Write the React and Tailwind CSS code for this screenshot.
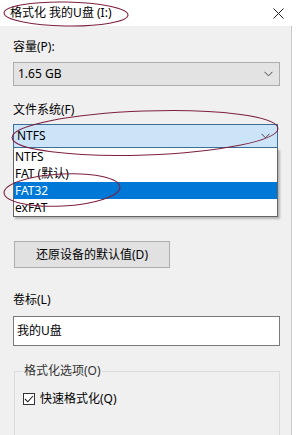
import { useState } from "react";

const font = { fontFamily: '"Noto Sans", "Noto Sans CJK SC", sans-serif' };

function Chevron({ className }) {
  return (
    <svg width="9" height="6" viewBox="0 0 9 6" className={className}>
      <path d="M0.5 0.8 L4.5 4.8 L8.5 0.8" fill="none" stroke="#444" strokeWidth="1" />
    </svg>
  );
}

function Annotations() {
  // hand drawn red rings on top of the dialog
  return (
    <svg className="absolute inset-0 pointer-events-none" width="296" height="435">
      <g fill="none" stroke="#7d2040" strokeWidth="1.1">
        <ellipse cx="66" cy="14" rx="62" ry="12" transform="rotate(1 66 14)" />
        <ellipse cx="145" cy="133" rx="133" ry="22" transform="rotate(-2 145 133)" />
        <ellipse cx="62" cy="190" rx="58" ry="16" transform="rotate(-3 62 190)" />
      </g>
    </svg>
  );
}

export default function App() {
  const [fs, setFs] = useState("FAT32");
  const options = ["NTFS", "FAT (默认)", "FAT32", "exFAT"];

  return (
    <div className="relative w-[296px] h-[435px] overflow-hidden bg-white text-[12px] text-black" style={font}>
      {/* Title bar */}
      <div className="flex items-center justify-between h-[26px] pl-[10px] pr-[12px]">
        <span className="leading-none">格式化 我的U盘 (I:)</span>
        <svg width="11" height="11" viewBox="0 0 11 11">
          <path d="M0.5 0.5 L10.5 10.5 M10.5 0.5 L0.5 10.5" stroke="#222" strokeWidth="1" />
        </svg>
      </div>

      <div className="flex h-[409px]">
        <div className="w-[292px] bg-[#f0f0f0] border-r border-[#c8c8c8] pl-[13px] pr-[11px]">
          <div className="mt-[13px] h-[16px] leading-[16px]">容量(P):</div>
          <div className="mt-[7px] flex items-center justify-between h-[24px] bg-[#e3e3e3] border border-[#adadad] pl-[4px] pr-[6px]">
            <span>1.65 GB</span>
            <Chevron />
          </div>

          <div className="mt-[16px] h-[16px] leading-[16px]">文件系统(F)</div>
          <div className="mt-[6px] w-[265px] flex items-center justify-between h-[24px] bg-[#cce4f7] border border-[#3c6e96] pl-[3px] pr-[7px]">
            <span>NTFS</span>
            <Chevron />
          </div>
          <div className="w-[265px] bg-white border border-t-0 border-[#646464] shadow-[2px_2px_2px_rgba(0,0,0,0.25)]">
            {options.map((o) => (
              <div
                key={o}
                onClick={() => setFs(o)}
                className={
                  "h-[17px] leading-[17px] pl-[1px] " +
                  (o === fs ? "bg-[#0078d7] text-white" : "")
                }
              >
                {o}
              </div>
            ))}
          </div>

          <button className="mt-[24px] ml-[1px] w-[156px] h-[27px] bg-[#e1e1e1] border border-[#adadad] text-center">
            还原设备的默认值(D)
          </button>

          <div className="mt-[24px] h-[16px] leading-[16px]">卷标(L)</div>
          <div className="mt-[8px] flex items-center h-[30px] bg-white border border-[#7a7a7a] pl-[3px]">
            我的U盘
          </div>

          <fieldset className="mt-[16px] ml-[1px] h-[80px] border border-[#dcdcdc] pl-[8px]">
            <legend className="px-[1px] text-[#333]">格式化选项(O)</legend>
            <label className="mt-[10px] flex items-center gap-[5px]">
              <span className="w-[12px] h-[12px] border border-[#333] bg-white flex items-center justify-center">
                <svg width="10" height="8" viewBox="0 0 10 8">
                  <path d="M1 4 L3.8 6.8 L9 1" fill="none" stroke="#222" strokeWidth="1.1" />
                </svg>
              </span>
              <span>快速格式化(Q)</span>
            </label>
          </fieldset>
        </div>
        <div className="flex-1 bg-white" />
      </div>

      <Annotations />
    </div>
  );
}
